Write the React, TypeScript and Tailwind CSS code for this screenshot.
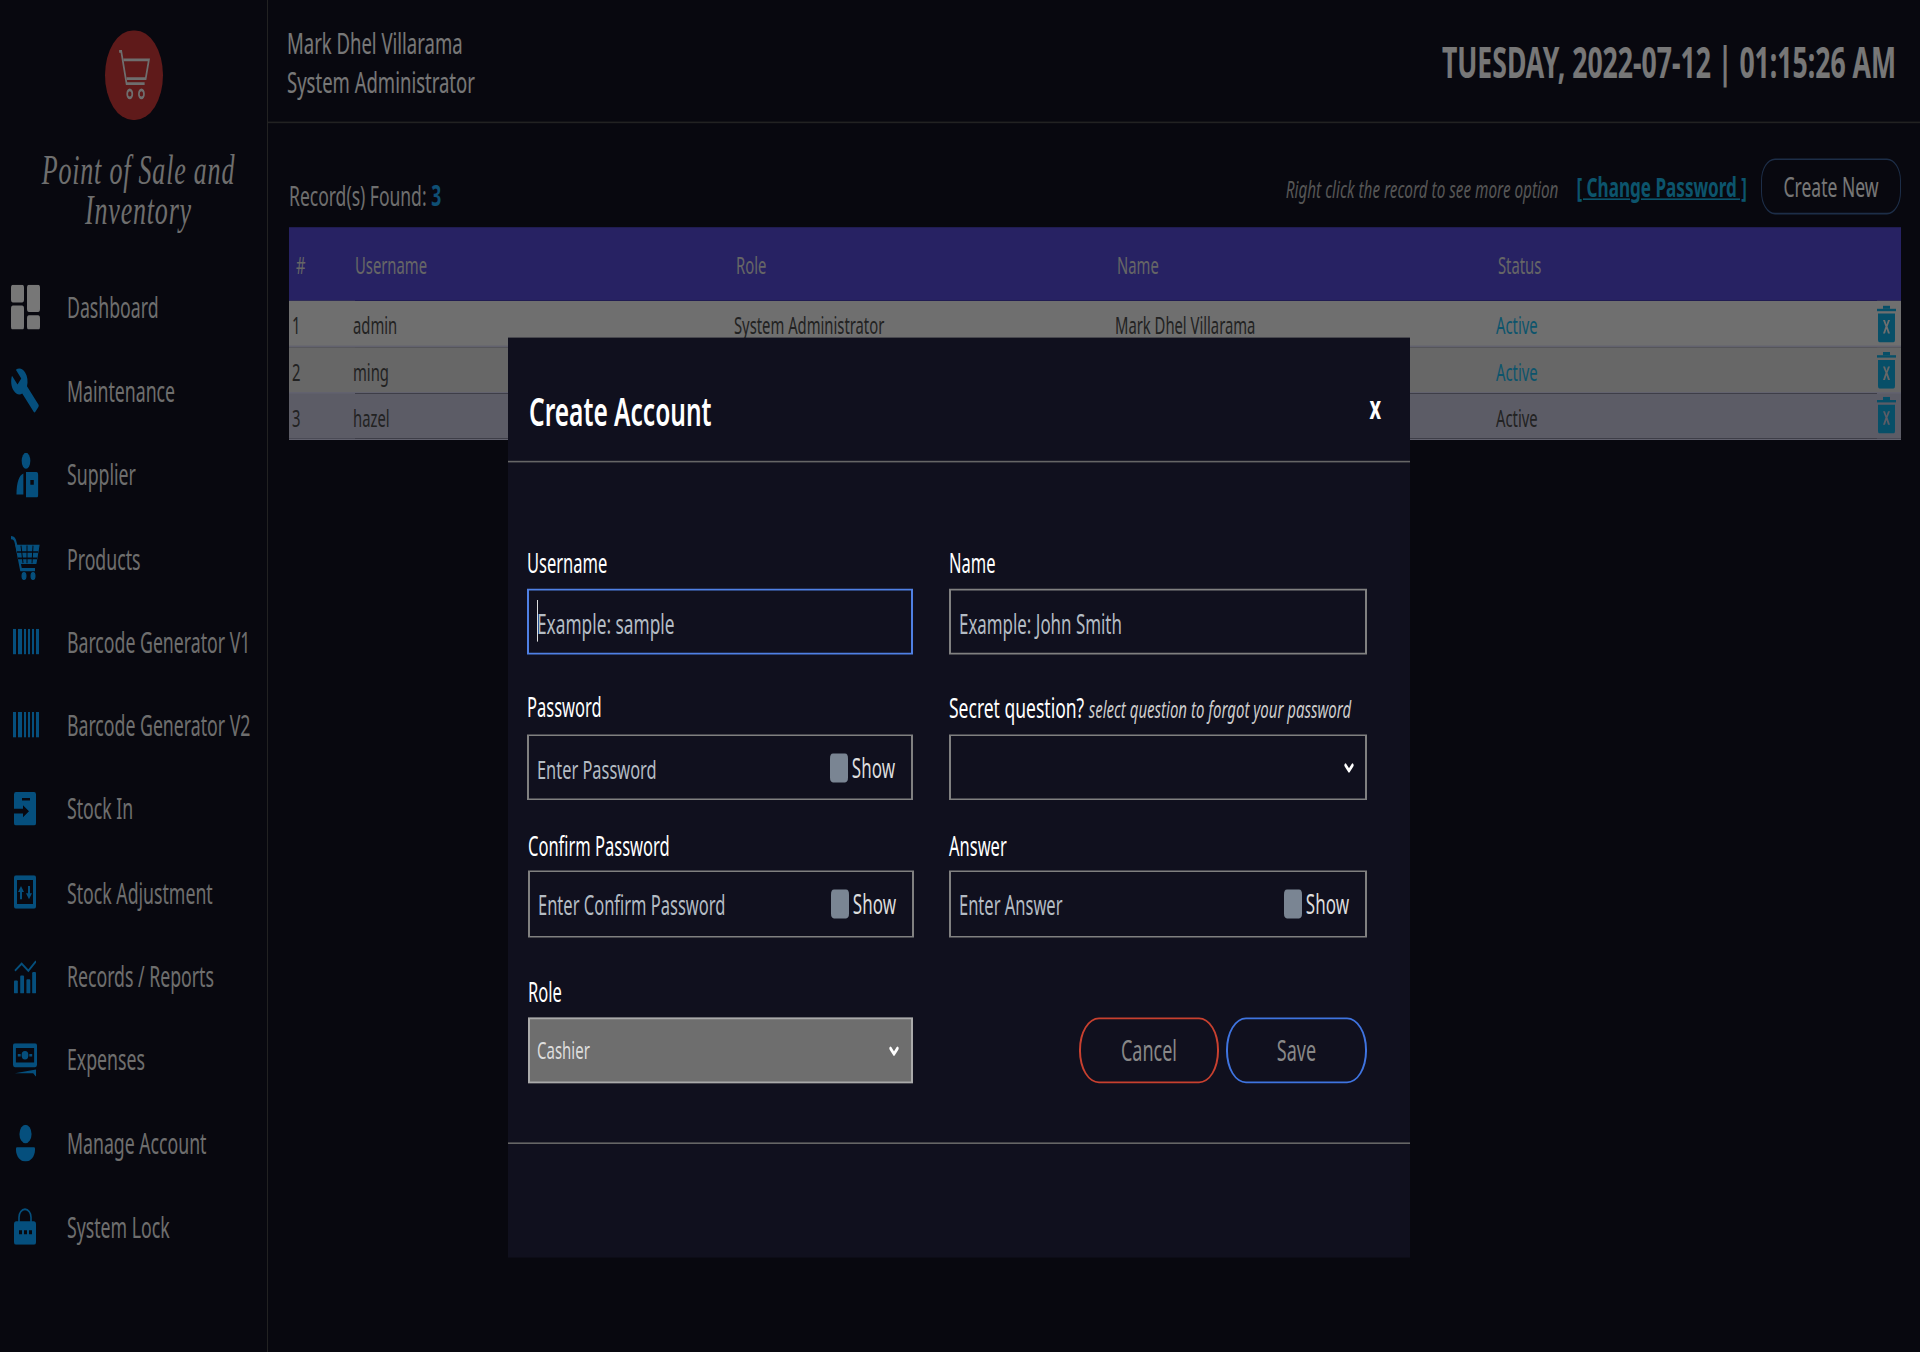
import { ChevronDown } from "lucide-react";
import { MdBuild } from "react-icons/md";
import type { ReactNode } from "react";

const Cart = () => (
  <svg viewBox="0 0 32 32" className="w-[34px] h-[34px]" fill="none" stroke="currentColor" strokeWidth="1.6">
    <path d="M2 2h2l5 19h17" />
    <path d="M6 7h24l-3 11H9" />
    <circle cx="12" cy="27" r="2.4" />
    <circle cx="23" cy="27" r="2.4" />
  </svg>
);

const DashboardIcon = () => (
  <svg viewBox="0 0 30 28" className="w-[30px] h-[28px] text-[#eeeeee]" fill="currentColor">
    <rect x="1" y="0" width="13" height="11" rx="2" />
    <rect x="17" y="0" width="13" height="17" rx="2" />
    <rect x="1" y="13" width="13" height="15" rx="2" />
    <rect x="17" y="19" width="13" height="9" rx="2" />
  </svg>
);

const SupplierIcon = () => (
  <svg viewBox="0 0 30 28" preserveAspectRatio="none" className="w-[26px] h-[28px] ml-[3px]" fill="currentColor">
    <circle cx="15" cy="5" r="5" />
    <path d="M4 26c0-7 3-12 8-13v13z" />
    <path fillRule="evenodd" d="M15 12h12a2 2 0 0 1 2 2v12a2 2 0 0 1-2 2H15zM20 17v3h4v-3z" />
  </svg>
);

const ProductsIcon = () => (
  <svg viewBox="0 0 30 28" className="w-[30px] h-[28px]" fill="none" stroke="currentColor">
    <path d="M1 1c3 0 4 1 5 4l5 16h14" strokeWidth="2" />
    <path d="M6 6h23l-3 11H10z" fill="currentColor" />
    <path d="M11 6l2 11M17 6v11M23 6l-1 11M7 10h21M8 14h19" stroke="#10101e" strokeWidth="1" />
    <circle cx="14" cy="25" r="2" fill="currentColor" />
    <circle cx="23" cy="25" r="2" fill="currentColor" />
  </svg>
);

const BarcodeIcon = () => (
  <svg viewBox="2 2 26 25" preserveAspectRatio="none" className="w-[26px] h-[16px] ml-[3px]" fill="currentColor">
    <rect x="2" y="2" width="3" height="25" />
    <rect x="7" y="2" width="4" height="25" />
    <rect x="13" y="2" width="2" height="25" />
    <rect x="17" y="2" width="2" height="25" />
    <rect x="21" y="2" width="2" height="25" />
    <rect x="25" y="2" width="3" height="25" />
  </svg>
);

const StockInIcon = () => (
  <svg viewBox="4 0 22 28" preserveAspectRatio="none" className="w-[22px] h-[21px] ml-[4px]" fill="currentColor">
    <path
      fillRule="evenodd"
      d="M6 0h18a2 2 0 0 1 2 2v24a2 2 0 0 1-2 2H6a2 2 0 0 1-2-2V18h9v3l6-5-6-5v3H4V2a2 2 0 0 1 2-2zM12 5v2h8V5z"
    />
  </svg>
);

const StockAdjustIcon = () => (
  <svg viewBox="4 0 22 28" preserveAspectRatio="none" className="w-[22px] h-[21px] ml-[4px]" fill="currentColor">
    <path
      fillRule="evenodd"
      d="M6 0h18a2 2 0 0 1 2 2v24a2 2 0 0 1-2 2H6a2 2 0 0 1-2-2V2a2 2 0 0 1 2-2zM7 4v20h16V4zM11 9l-3 5h2v6h2v-6h2zM19 20l3-5h-2V9h-2v6h-2z"
    />
  </svg>
);

const RecordsIcon = () => (
  <svg viewBox="4 0 23 28" preserveAspectRatio="none" className="w-[22px] h-[21px] ml-[4px]" fill="currentColor">
    <rect x="4" y="17" width="4" height="11" rx="1" />
    <rect x="10.500" y="13" width="4" height="15" rx="1" />
    <rect x="17" y="16" width="4" height="12" rx="1" />
    <rect x="23" y="10" width="4" height="18" rx="1" />
    <path d="M5 9l7-6 7 6 8-8" fill="none" stroke="currentColor" strokeWidth="1.8" />
  </svg>
);

const ExpensesIcon = () => (
  <svg viewBox="3 0 25 28" preserveAspectRatio="none" className="w-[24px] h-[21px] ml-[3px]" fill="currentColor">
    <path
      fillRule="evenodd"
      d="M5 0h21a2 2 0 0 1 2 2v16a2 2 0 0 1-2 2H5a2 2 0 0 1-2-2V2a2 2 0 0 1 2-2zM6 4v12h19V4zM15.500 6.500a3.500 3.500 0 1 1 0 7 3.500 3.500 0 0 1 0-7zM8 9h3v2H8zM20 9h3v2h-3z"
    />
    <path d="M5 25l22-3v6l-3-3z" />
  </svg>
);

const AccountIcon = () => (
  <svg viewBox="4 0 22 28" preserveAspectRatio="none" className="w-[19px] h-[23px] ml-[6px]" fill="currentColor">
    <ellipse cx="15" cy="7" rx="7" ry="7" />
    <path d="M5 17h20c1 0 1 1 1 2 0 5-5 9-11 9S4 24 4 19c0-1 0-2 1-2z" />
  </svg>
);

const LockIcon = () => (
  <svg viewBox="4 0 22 28" preserveAspectRatio="none" className="w-[22px] h-[23px] ml-[4px]" fill="currentColor">
    <path d="M9 11V7a6 6 0 0 1 12 0v4" fill="none" stroke="currentColor" strokeWidth="1.6" />
    <path
      fillRule="evenodd"
      d="M6 10h18a2 2 0 0 1 2 2v14a2 2 0 0 1-2 2H6a2 2 0 0 1-2-2V12a2 2 0 0 1 2-2zM9 17v3h3v-3zM14 17v3h3v-3zM19 17v3h3v-3z"
    />
  </svg>
);

const TrashIcon = () => (
  <svg viewBox="0 0 19 23" className="w-[19px] h-[23px] text-[#0f9fd0]" fill="currentColor">
    <rect x="0" y="2" width="19" height="1.500" />
    <rect x="6" y="0" width="7" height="2" />
    <path
      fillRule="evenodd"
      d="M1 5h17v16a2 2 0 0 1-2 2H3a2 2 0 0 1-2-2zM6 9l2.500 4L6 17.500h2l1.500-3 1.500 3h2L10.500 13 13 9h-2l-1.500 2.800L8 9z"
    />
  </svg>
);

const NAV_ITEMS: { label: string; icon: ReactNode }[] = [
  { label: "Dashboard", icon: <DashboardIcon /> },
  { label: "Maintenance", icon: <MdBuild className="w-[34px] h-[30px] -ml-[2px]" /> },
  { label: "Supplier", icon: <SupplierIcon /> },
  { label: "Products", icon: <ProductsIcon /> },
  { label: "Barcode Generator V1", icon: <BarcodeIcon /> },
  { label: "Barcode Generator V2", icon: <BarcodeIcon /> },
  { label: "Stock In", icon: <StockInIcon /> },
  { label: "Stock Adjustment", icon: <StockAdjustIcon /> },
  { label: "Records / Reports", icon: <RecordsIcon /> },
  { label: "Expenses", icon: <ExpensesIcon /> },
  { label: "Manage Account", icon: <AccountIcon /> },
  { label: "System Lock", icon: <LockIcon /> },
];

const ACCOUNTS = [
  { id: 1, username: "admin", role: "System Administrator", name: "Mark Dhel Villarama", bg: "bg-[#dedede]", status: "text-[#18a9d8]" },
  { id: 2, username: "ming", role: "Cashier", name: "Ming", bg: "bg-[#cecece]", status: "text-[#18a9d8]" },
  { id: 3, username: "hazel", role: "Cashier", name: "Hazel", bg: "bg-[#b8b8cc]", status: "text-[#444444]" },
];

const inputClass = "w-full h-full bg-transparent px-[8px] pt-[1px] text-white outline-none placeholder:text-[#b4bcc4]";
const labelClass = "block h-[24px] leading-[24px] text-[16.500px]";
const fieldBorder = "border-x-2 border-y border-[#808080]";

function ShowToggle() {
  return (
    <span className="absolute right-[16px] top-0 h-full flex items-center gap-[4px] text-[17px] text-[#dddddd]">
      <span className="w-[18px] h-[18px] rounded-[3px] bg-[#7a8593]"></span>
      Show
    </span>
  );
}

export default function App() {
  return (
    <div className="h-[1352px] w-full overflow-hidden bg-[#08080f] font-['Noto_Sans',sans-serif]">
      {/* the whole shot is stretched vertically */}
      <div className="relative w-[1920px] h-[845px] origin-top scale-y-[1.6] flex bg-[#10101e]">
        <aside className="w-[268px] shrink-0 h-full border-r border-[#444444] text-[#dddddd]">
          <div className="h-[148px] pt-[19px] flex flex-col items-center">
            <div className="w-[58px] h-[56px] rounded-full bg-[#be3434] flex items-center justify-center text-[#dddddd]">
              <Cart />
            </div>
            <p className="mt-[20px] ml-[10px] w-[230px] text-center text-[26px] leading-[24.500px] italic tracking-[0.8px] font-['Liberation_Serif',serif]">
              Point of Sale and Inventory
            </p>
          </div>
          <nav className="mt-[18px]">
            {NAV_ITEMS.map((item) => (
              <div key={item.label} className="h-[52.250px] flex items-center pl-[10px] text-[17.700px] text-[#dddddd]">
                <span className="w-[57px] text-[#0a9ffa]">{item.icon}</span>
                <span className="whitespace-nowrap">{item.label}</span>
              </div>
            ))}
          </nav>
        </aside>

        <main className="flex-1 min-w-0">
          <header className="h-[77px] pl-[19px] pr-[24px] pt-[2px] flex items-center justify-between border-b border-[#444444]">
            <div className="text-[18.500px] leading-[24.500px] text-[#eeeeee]">
              <p>Mark Dhel Villarama</p>
              <p>System Administrator</p>
            </div>
            <p className="pt-[1px] text-[26.600px] font-bold text-[#eeeeee]">TUESDAY, 2022-07-12 | 01:15:26 AM</p>
          </header>

          <div className="pl-[21px] pr-[19px]">
            <div className="h-[65px] pt-[22px] pb-[8px] flex items-center">
              <p className="self-end text-[17.500px] leading-[24px] text-[#dddddd]">
                Record(s) Found: <span className="font-bold text-[#1e9fe8]">3</span>
              </p>
              <p className="ml-auto pt-[4px] text-[15.300px] italic text-[#aaaaaa]">Right click the record to see more option</p>
              <a className="ml-[18px] text-[17.100px] font-bold underline text-[#18a9d8]">[ Change Password ]</a>
              <button className="ml-[14px] w-[140px] h-[35px] rounded-[14px] border border-[#3a5c90] text-[17.500px] text-[#eeeeee]">
                Create New
              </button>
            </div>

            <table className="w-full border-collapse text-[14.800px]">
              <thead>
                <tr className="h-[46px] bg-[#4e44c6] text-[#cccccc] text-left">
                  <th className="w-[66px] pl-[7px] font-normal">#</th>
                  <th className="w-[381px] font-normal">Username</th>
                  <th className="w-[381px] font-normal">Role</th>
                  <th className="w-[381px] font-normal">Name</th>
                  <th className="font-normal">Status</th>
                  <th className="w-[24px]"></th>
                </tr>
              </thead>
              <tbody>
                {ACCOUNTS.map((a) => (
                  <tr key={a.id} className={`h-[28.700px] ${a.bg} text-[#444444] border-b border-[#c4c4dc]`}>
                    <td className="pl-[3px] pt-[2px]">{a.id}</td>
                    <td className="pt-[2px] -translate-x-[2px]">{a.username}</td>
                    <td className="pt-[2px] -translate-x-[2px]">{a.role}</td>
                    <td className="pt-[2px] -translate-x-[2px]">{a.name}</td>
                    <td className={`pt-[2px] -translate-x-[2px] ${a.status}`}>Active</td>
                    <td>
                      <TrashIcon />
                    </td>
                  </tr>
                ))}
              </tbody>
            </table>
          </div>
        </main>

        {/* modal */}
        <div className="absolute inset-0 bg-black/50 pl-[508px] pt-[211px]">
          <div className="w-[902px] h-[575px] bg-[#10101e] text-white">
            <div className="h-[78px] pl-[21px] pr-[19px] pt-[16px] flex items-center justify-between border-b border-[#666666]">
              <h2 className="text-[24.500px] font-semibold">Create Account</h2>
              <span className="mr-[10px] -mt-[6px] text-[20px] font-bold leading-none">x</span>
            </div>

            <div className="pl-[19px] pt-[50px] grid grid-cols-[386px_418px] gap-x-[36px]">
              <div>
                <label className={`${labelClass} pt-[1px] mb-[5px]`}>Username</label>
                <div className="relative h-[41px] border-x-2 border-y border-[#4f80e4]">
                  <input className={`${inputClass} text-[17.300px]`} placeholder="Example: sample" />
                  <span className="absolute left-[8px] top-[6px] h-[26px] w-px bg-[#dddddd]"></span>
                </div>

                <label className={`${labelClass} mt-[21px] mb-[5px]`}>Password</label>
                <div className={`relative h-[41px] ${fieldBorder}`}>
                  <input className={`${inputClass} text-[16.400px]`} placeholder="Enter Password" />
                  <ShowToggle />
                </div>

                <label className={`${labelClass} mt-[17px] mb-[3px] ml-[1px]`}>Confirm Password</label>
                <div className={`relative h-[42px] ml-[1px] -mr-[1px] ${fieldBorder}`}>
                  <input className={`${inputClass} text-[16.500px]`} placeholder="Enter Confirm Password" />
                  <ShowToggle />
                </div>

                <label className={`${labelClass} pt-[1px] mt-[21px] mb-[5px] ml-[1px]`}>Role</label>
                <div className="ml-[1px] h-[41px] pl-[7px] pr-[10px] flex items-center justify-between bg-[#6e6e6e] border-x-2 border-y border-[#aaaaaa] text-[15px] text-[#dddddd]">
                  Cashier
                  <ChevronDown size={14} strokeWidth={4} className="text-white" />
                </div>
              </div>

              <div>
                <label className={`${labelClass} pt-[1px] mb-[5px]`}>Name</label>
                <div className={`h-[41px] ${fieldBorder}`}>
                  <input className={`${inputClass} text-[16.900px]`} placeholder="Example: John Smith" />
                </div>

                <label className="block h-[24px] leading-[24px] mt-[21px] mb-[5px] text-[17.500px] whitespace-nowrap">
                  Secret question? <i className="text-[15px] text-[#cccccc]">select question to forgot your password</i>
                </label>
                <div className={`h-[41px] pr-[9px] flex items-center justify-end ${fieldBorder}`}>
                  <ChevronDown size={14} strokeWidth={4} className="text-white" />
                </div>

                <label className={`${labelClass} mt-[17px] mb-[3px]`}>Answer</label>
                <div className={`relative h-[42px] ${fieldBorder}`}>
                  <input className={`${inputClass} text-[16.500px]`} placeholder="Enter Answer" />
                  <ShowToggle />
                </div>

                <div className="mt-[50px] flex justify-end gap-[7px] text-[18px] text-[#888888]">
                  <button className="w-[140px] h-[41px] rounded-[20px] border-x-2 border-y border-[#c8402f]">Cancel</button>
                  <button className="w-[141px] h-[41px] rounded-[20px] border-x-2 border-y border-[#3f74e0]">Save</button>
                </div>
              </div>
            </div>

            <div className="mt-[37px] border-t border-[#666666]"></div>
          </div>
        </div>
      </div>
    </div>
  );
}
